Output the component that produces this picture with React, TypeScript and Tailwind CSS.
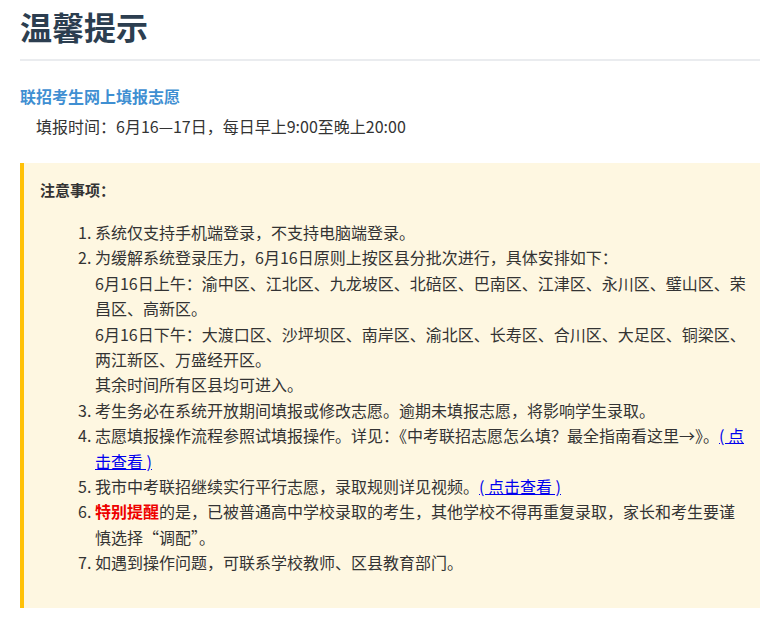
export default function App() {
  const f = { fontFamily: '"Noto Sans CJK SC", "Liberation Sans", sans-serif' };
  const link = "text-[#0000ee] underline";
  return (
    <div style={f} className="w-[772px] h-[628px] bg-white pl-5 pr-3 text-[#333] overflow-hidden">
      <h1 className="text-[32px] font-bold text-[#2c3e50] leading-[40px] pt-[6px] pb-[13px] border-b-2 border-[#eaecef]">温馨提示</h1>
      <h3 className="mt-[22px] text-[16px] font-bold text-[#3f8fd2] leading-[26px]">联招考生网上填报志愿</h3>
      <p className="mt-[4px] pl-[16px] text-[16px] leading-[26px]">填报时间：6月16—17日，每日早上9:00至晚上20:00</p>
      <div className="mt-[24px] h-[445px] border-l-4 border-[#ffc107] bg-[#fef7e1] pl-[16px] pr-[12px] pt-[14px]">
        <p className="text-[15px] font-bold leading-[26px]">注意事项：</p>
        <ol className="mt-[17px] list-decimal pl-[55px] text-[16px] leading-[25.4px]">
          <li>系统仅支持手机端登录，不支持电脑端登录。</li>
          <li>为缓解系统登录压力，6月16日原则上按区县分批次进行，具体安排如下：<br />6月16日上午：渝中区、江北区、九龙坡区、北碚区、巴南区、江津区、永川区、璧山区、荣昌区、高新区。<br />6月16日下午：大渡口区、沙坪坝区、南岸区、渝北区、长寿区、合川区、大足区、铜梁区、两江新区、万盛经开区。<br />其余时间所有区县均可进入。</li>
          <li>考生务必在系统开放期间填报或修改志愿。逾期未填报志愿，将影响学生录取。</li>
          <li>志愿填报操作流程参照试填报操作。详见：《中考联招志愿怎么填？最全指南看这里→》。<a className={link}>( 点击查看 )</a></li>
          <li>我市中考联招继续实行平行志愿，录取规则详见视频。<a className={link}>( 点击查看 )</a></li>
          <li><span className="text-[#e00] font-bold">特别提醒</span>的是，已被普通高中学校录取的考生，其他学校不得再重复录取，家长和考生要谨慎选择“调配”。</li>
          <li>如遇到操作问题，可联系学校教师、区县教育部门。</li>
        </ol>
      </div>
    </div>
  );
}
